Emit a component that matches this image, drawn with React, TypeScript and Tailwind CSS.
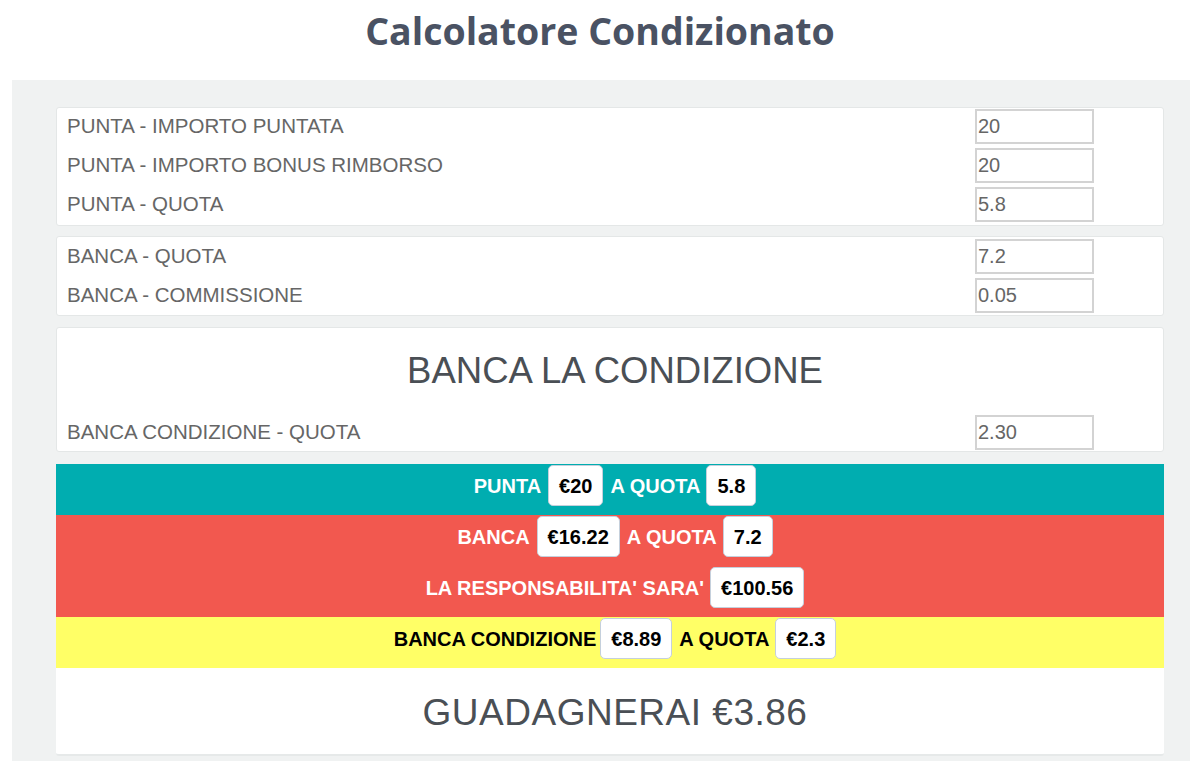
import React from 'react';

const Field = ({ label, value }: { label: string; value: string }) => (
  <div className="grid grid-cols-[1fr_188px] items-center h-[35px]">
    <span className="pl-[10px] text-[20.5px] text-[#666666] leading-none">{label}</span>
    <input
      readOnly
      value={value}
      className="w-[119px] h-[35px] border-2 border-[#d3d3d3] bg-white px-[1px] text-[20px] text-[#666666] outline-none"
    />
  </div>
);

const Pill = ({ children, className = '' }: { children: React.ReactNode; className?: string }) => (
  <span
    className={`inline-flex items-center h-[41px] px-[10px] bg-white border border-[#c5d0dc] rounded-[5px] text-black ${className}`}
  >
    {children}
  </span>
);

const Line = ({ children }: { children: React.ReactNode }) => (
  <div className="flex justify-center items-start h-[51px] pt-[1px] pl-[10px]">
    <div className="flex items-center h-[41px]">{children}</div>
  </div>
);

export default function App() {
  return (
    <div className="min-h-[761px] bg-white" style={{ fontFamily: '"Liberation Sans", Arial, sans-serif' }}>
      <h1
        className="h-[80px] pt-[8px] text-center text-[37.5px] font-bold text-[#4a5263] leading-[46px]"
        style={{ fontFamily: '"Open Sans", sans-serif' }}
      >
        Calcolatore Condizionato
      </h1>

      <div className="mx-[12px] w-[1178px] bg-[#f0f2f2] pt-[27px] pb-[7px] pl-[44px] pr-[26px]">
        <div className="bg-white border border-[#e4e7e7] rounded-[3px] pt-[1px] pb-[3px] flex flex-col gap-[4px]">
          <Field label="PUNTA - IMPORTO PUNTATA" value="20" />
          <Field label="PUNTA - IMPORTO BONUS RIMBORSO" value="20" />
          <Field label="PUNTA - QUOTA" value="5.8" />
        </div>

        <div className="mt-[10px] bg-white border border-[#e4e7e7] rounded-[3px] py-[2px] flex flex-col gap-[4px]">
          <Field label="BANCA - QUOTA" value="7.2" />
          <Field label="BANCA - COMMISSIONE" value="0.05" />
        </div>

        <div className="mt-[11px] bg-white border border-[#e4e7e7] rounded-[3px] pt-[19px] pb-[1px]">
          <h2 className="pl-[10px] text-center text-[36.5px] leading-[48px] text-[#4a4f55] mb-[20px]">
            BANCA LA CONDIZIONE
          </h2>
          <Field label="BANCA CONDIZIONE - QUOTA" value="2.30" />
        </div>

        <div className="mt-[12px] bg-white border-b-2 border-[#e6e9e9] rounded-b-[3px] font-bold text-[20px]">
          <div className="bg-[#00adb0] text-white">
            <Line>
              <span>PUNTA</span>
              <Pill className="mx-[7px]">€20</Pill>
              <span>A QUOTA</span>
              <Pill className="ml-[6px]">5.8</Pill>
            </Line>
          </div>
          <div className="bg-[#f2584f] text-white">
            <Line>
              <span>BANCA</span>
              <Pill className="mx-[7px]">€16.22</Pill>
              <span>A QUOTA</span>
              <Pill className="ml-[6px]">7.2</Pill>
            </Line>
            <Line>
              <span>LA RESPONSABILITA' SARA'</span>
              <Pill className="ml-[6px]">€100.56</Pill>
            </Line>
          </div>
          <div className="bg-[#ffff66] text-black">
            <Line>
              <span>BANCA CONDIZIONE</span>
              <Pill className="ml-[4px] mr-[7px]">€8.89</Pill>
              <span>A QUOTA</span>
              <Pill className="ml-[6px]">€2.3</Pill>
            </Line>
          </div>
          <div className="h-[86px] pt-[4px] pl-[10px] flex items-center justify-center">
            <span className="text-[37px] font-normal text-[#4a4f55] tracking-[0.5px]">GUADAGNERAI €3.86</span>
          </div>
        </div>
      </div>
    </div>
  );
}
